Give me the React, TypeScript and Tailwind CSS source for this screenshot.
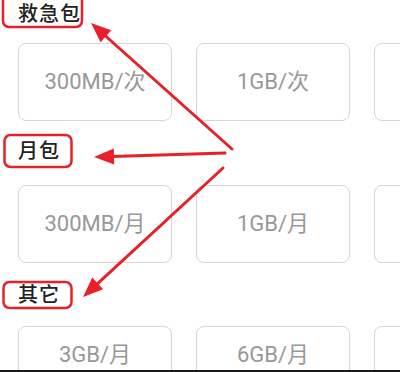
const sections = [
  {
    title: '救急包',
    items: [{ main: '300MB/次' }, { main: '1GB/次' }, { main: '3GB/次' }],
  },
  {
    title: '月包',
    items: [{ main: '300MB/月' }, { main: '1GB/月' }, { main: '3GB/月' }],
  },
  {
    title: '其它',
    items: [
      { main: '3GB/月', sub: '省内流量' },
      { main: '6GB/月', sub: '国内通用流量' },
      { main: '10GB/月', sub: '国内通用流量' },
    ],
  },
];

const font = { fontFamily: 'Roboto, "Noto Sans CJK SC", sans-serif' };

function PackCard({ main, sub }: { main: string; sub?: string }) {
  return (
    <div
      className={
        'w-[154px] shrink-0 rounded-[8px] border-[1.5px] border-[#d6d6d6] bg-white flex flex-col items-center ' +
        (sub ? 'h-[78px] pt-[17px]' : 'h-[78px] justify-center')
      }
    >
      <span className="text-[22px] leading-[22px] text-[#989898]">{main}</span>
      {sub && <span className="mt-[5px] text-[14px] leading-[16px] text-[#989898]">{sub}</span>}
    </div>
  );
}

type Pt = [number, number];

function Arrow({ from, to }: { from: Pt; to: Pt }) {
  const dx = to[0] - from[0];
  const dy = to[1] - from[1];
  const len = Math.hypot(dx, dy);
  const ux = dx / len;
  const uy = dy / len;
  const bx = to[0] - ux * 20;
  const by = to[1] - uy * 20;
  const nx = -uy * 8;
  const ny = ux * 8;
  return (
    <g>
      <line x1={from[0]} y1={from[1]} x2={bx + ux * 2} y2={by + uy * 2} stroke="#e8202a" strokeWidth={3} strokeLinecap="round" />
      <polygon points={`${to[0]},${to[1]} ${bx + nx},${by + ny} ${bx - nx},${by - ny}`} fill="#e8202a" />
    </g>
  );
}

export default function App() {
  return (
    <div className="w-[400px] h-[372px] bg-white flex flex-col" style={font}>
      <div className="relative h-[370px] overflow-hidden">
        <div className="pl-[18px]">
          {/* 救急包 */}
          <div className="h-[28px] flex items-center text-[20px] font-medium tracking-[1px] text-[#222]">{sections[0].title}</div>
          <div className="mt-[15px] flex gap-[24px]">
            {sections[0].items.map((it) => (
              <PackCard key={it.main} {...it} />
            ))}
          </div>

          {/* 月包 */}
          <div className="mt-[16px] h-[28px] flex items-center text-[20px] font-medium tracking-[1px] text-[#222]">{sections[1].title}</div>
          <div className="mt-[20px] flex gap-[24px]">
            {sections[1].items.map((it) => (
              <PackCard key={it.main} {...it} />
            ))}
          </div>

          {/* 其它 */}
          <div className="mt-[18px] h-[28px] flex items-center text-[20px] font-medium tracking-[1px] text-[#222]">{sections[2].title}</div>
          <div className="mt-[17px] flex gap-[24px]">
            {sections[2].items.map((it) => (
              <PackCard key={it.main} {...it} />
            ))}
          </div>
        </div>

        {/* annotations */}
        <svg className="absolute inset-0 pointer-events-none" width="400" height="370" viewBox="0 0 400 370">
          <rect x="3" y="-6" width="79" height="33" rx="6" fill="none" stroke="#e8202a" strokeWidth="2.5" />
          <rect x="4.5" y="135" width="67" height="32" rx="6" fill="none" stroke="#e8202a" strokeWidth="2.5" />
          <rect x="3.5" y="282" width="68" height="26" rx="6" fill="none" stroke="#e8202a" strokeWidth="2.5" />
          <Arrow from={[232, 149]} to={[91, 23]} />
          <Arrow from={[225, 153]} to={[94, 157]} />
          <Arrow from={[223, 168]} to={[83, 297]} />
        </svg>
      </div>
      <div className="h-[2px] bg-[#1a1a1a]" />
    </div>
  );
}
